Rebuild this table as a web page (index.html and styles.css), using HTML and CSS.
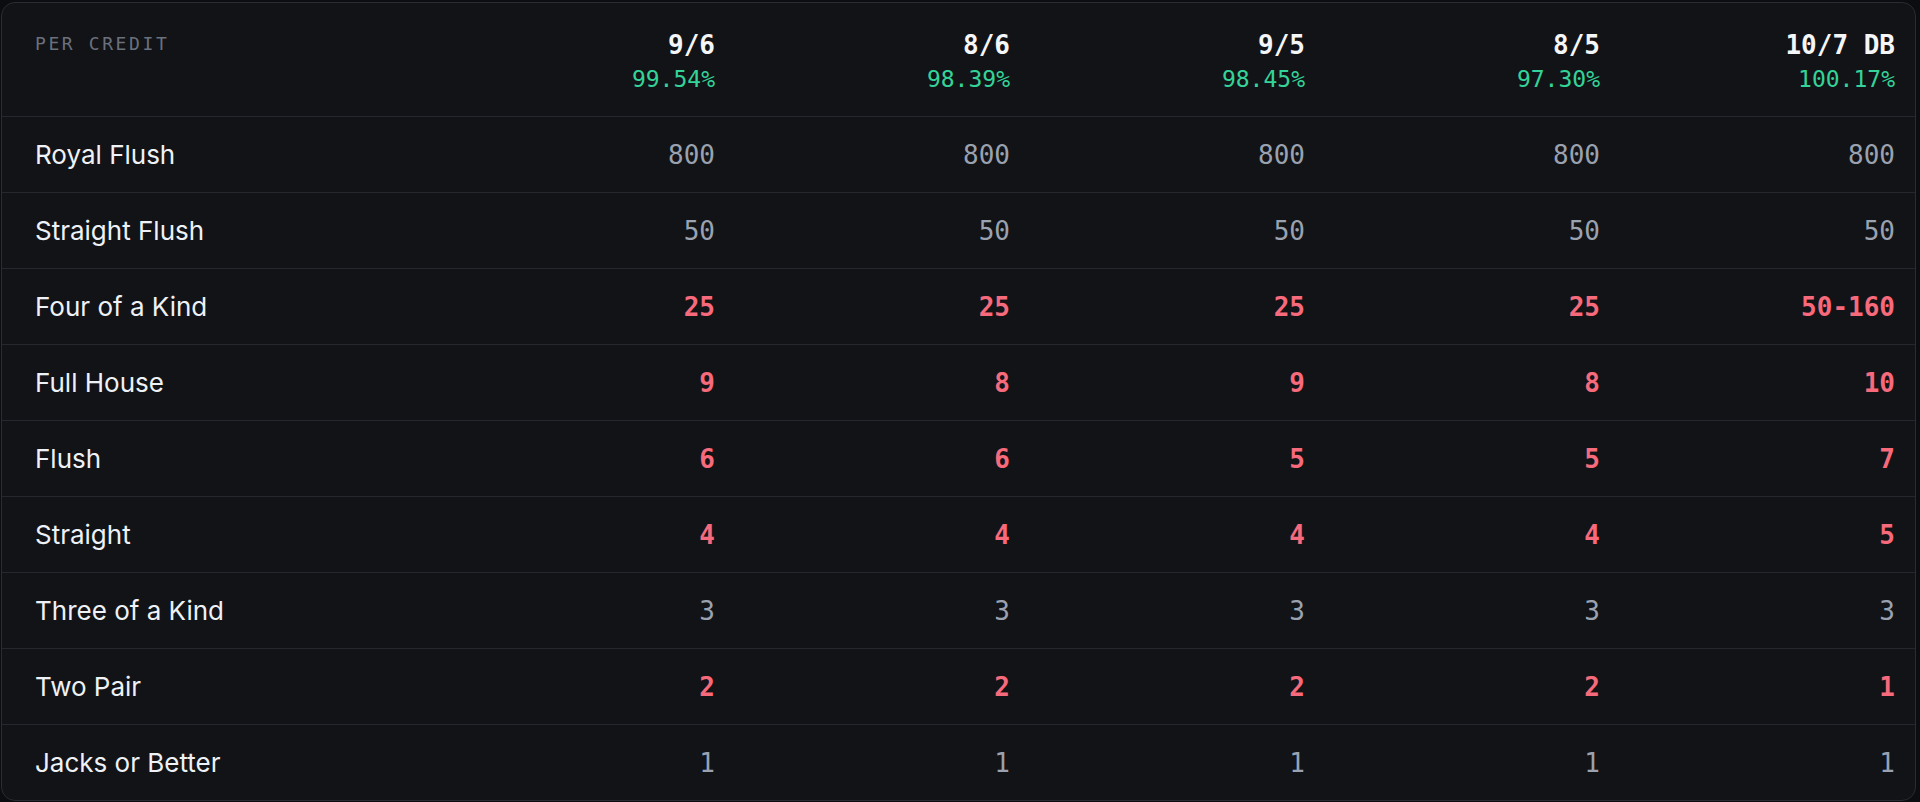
FILE: index.html
```html
<!DOCTYPE html>
<html lang="en">
<head>
<meta charset="utf-8">
<title>Paytable</title>
<link rel="stylesheet" href="styles.css">
</head>
<body>
<div class="page">
  <div class="card">
    <div class="row head">
      <div class="cap">PER CREDIT</div>
      <div class="col"><div class="name">9/6</div><div class="pct">99.54%</div></div>
      <div class="col"><div class="name">8/6</div><div class="pct">98.39%</div></div>
      <div class="col"><div class="name">9/5</div><div class="pct">98.45%</div></div>
      <div class="col"><div class="name">8/5</div><div class="pct">97.30%</div></div>
      <div class="col"><div class="name">10/7 DB</div><div class="pct">100.17%</div></div>
    </div>
    <div class="row">
      <div class="label">Royal Flush</div>
      <div class="num">800</div><div class="num">800</div><div class="num">800</div><div class="num">800</div><div class="num">800</div>
    </div>
    <div class="row">
      <div class="label">Straight Flush</div>
      <div class="num">50</div><div class="num">50</div><div class="num">50</div><div class="num">50</div><div class="num">50</div>
    </div>
    <div class="row">
      <div class="label">Four of a Kind</div>
      <div class="num hot">25</div><div class="num hot">25</div><div class="num hot">25</div><div class="num hot">25</div><div class="num hot">50-160</div>
    </div>
    <div class="row">
      <div class="label">Full House</div>
      <div class="num hot">9</div><div class="num hot">8</div><div class="num hot">9</div><div class="num hot">8</div><div class="num hot">10</div>
    </div>
    <div class="row">
      <div class="label">Flush</div>
      <div class="num hot">6</div><div class="num hot">6</div><div class="num hot">5</div><div class="num hot">5</div><div class="num hot">7</div>
    </div>
    <div class="row">
      <div class="label">Straight</div>
      <div class="num hot">4</div><div class="num hot">4</div><div class="num hot">4</div><div class="num hot">4</div><div class="num hot">5</div>
    </div>
    <div class="row">
      <div class="label">Three of a Kind</div>
      <div class="num">3</div><div class="num">3</div><div class="num">3</div><div class="num">3</div><div class="num">3</div>
    </div>
    <div class="row">
      <div class="label">Two Pair</div>
      <div class="num hot">2</div><div class="num hot">2</div><div class="num hot">2</div><div class="num hot">2</div><div class="num hot">1</div>
    </div>
    <div class="row last">
      <div class="label">Jacks or Better</div>
      <div class="num">1</div><div class="num">1</div><div class="num">1</div><div class="num">1</div><div class="num">1</div>
    </div>
  </div>
</div>
</body>
</html>
```
FILE: styles.css
```css
html, body {
  margin: 0;
  padding: 0;
  background: #0c0d10;
}
.page {
  padding: 2px 4px 0 1px;
}
.card {
  border: 1px solid #2a2b33;
  border-radius: 14px;
  background: #121317;
  overflow: hidden;
}
.row {
  display: grid;
  grid-template-columns: 385px repeat(5, 295px);
  padding: 0 22px 0 33px;
  height: 75px;
  align-items: center;
  border-bottom: 1px solid #26272e;
}
.row.last {
  border-bottom: none;
}
.row.head {
  height: 113px;
  align-items: start;
}
.cap {
  font-family: "DejaVu Sans Mono", monospace;
  font-size: 18px;
  letter-spacing: 2.6px;
  color: #6a707c;
  padding-top: 30px;
}
.col {
  text-align: right;
  font-family: "DejaVu Sans Mono", monospace;
  padding-top: 26px;
}
.name {
  font-size: 26px;
  font-weight: bold;
  color: #f5f6f8;
  line-height: 32px;
}
.pct {
  font-size: 23px;
  color: #34d399;
  line-height: 32px;
  margin-top: 2px;
}
.label {
  font-family: Inter, "Noto Sans", sans-serif;
  font-size: 26px;
  color: #eef1f6;
}
.num {
  text-align: right;
  font-family: "DejaVu Sans Mono", monospace;
  font-size: 26px;
  color: #9aa2b0;
}
.num.hot {
  color: #f66a7c;
  font-weight: bold;
}
```
